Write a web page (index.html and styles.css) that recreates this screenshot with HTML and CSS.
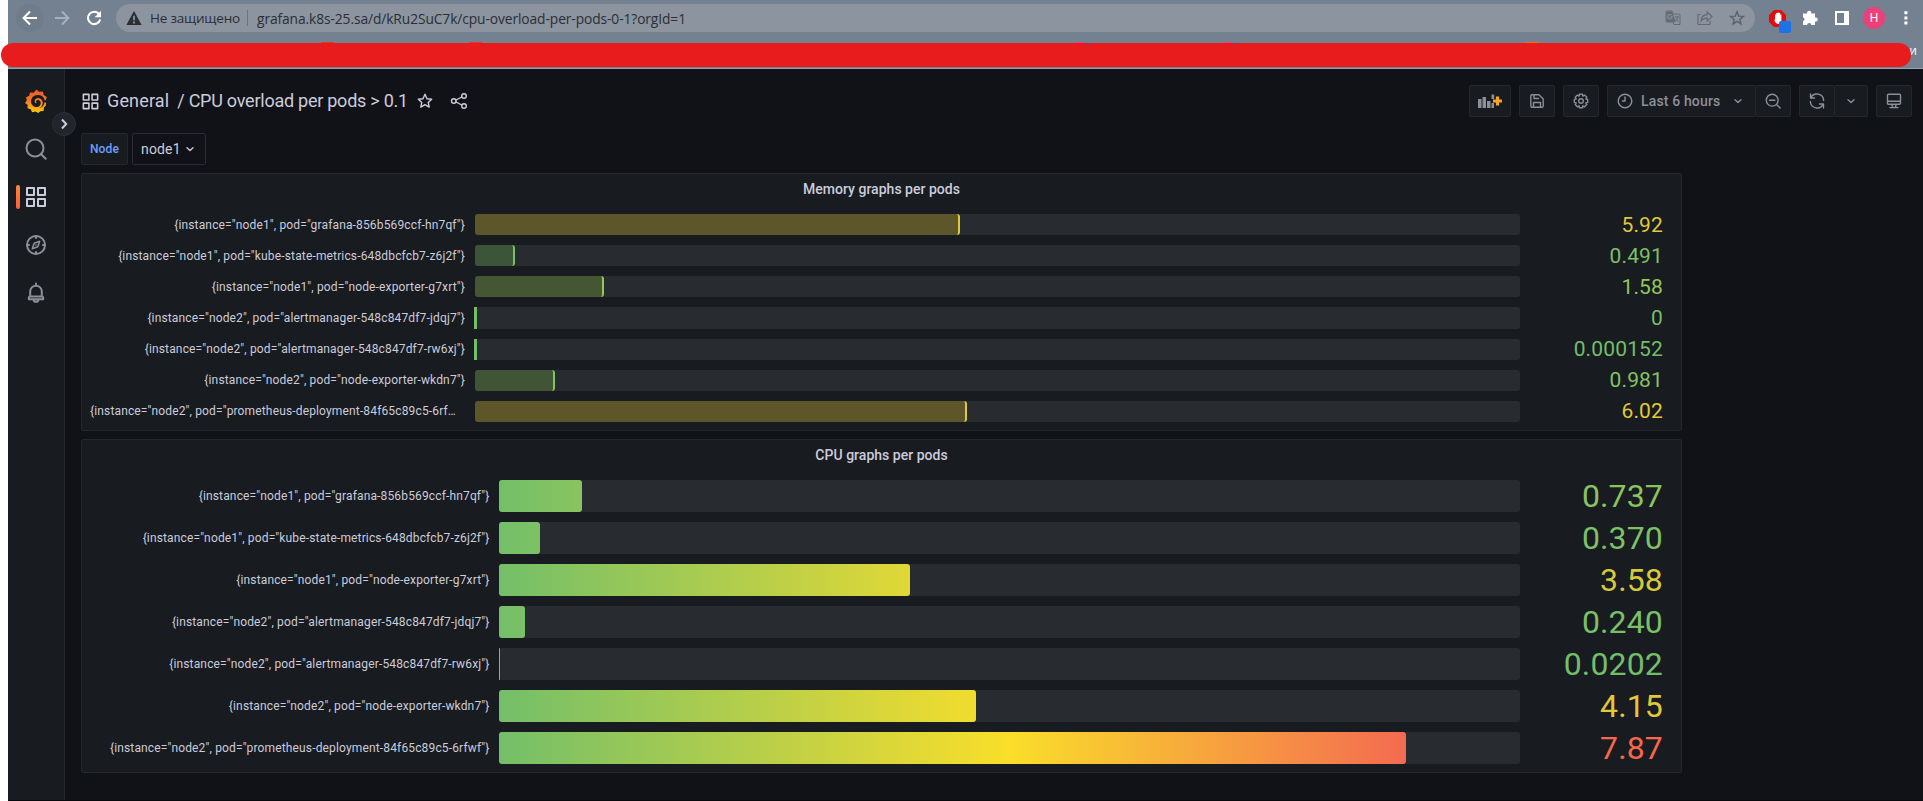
FILE: index.html
```html
<!DOCTYPE html>
<html lang="ru">
<head>
<meta charset="utf-8">
<title>CPU overload per pods &gt; 0.1 - Grafana</title>
<link rel="stylesheet" href="styles.css">
</head>
<body>
<svg class="defs" width="0" height="0">
  <symbol id="apps" viewBox="0 0 24 24"><path fill="currentColor" d="M10,13H3a1,1,0,0,0-1,1v7a1,1,0,0,0,1,1h7a1,1,0,0,0,1-1V14A1,1,0,0,0,10,13ZM9,20H4V15H9ZM21,2H14a1,1,0,0,0-1,1v7a1,1,0,0,0,1,1h7a1,1,0,0,0,1-1V3A1,1,0,0,0,21,2ZM20,9H15V4h5Zm1,4H14a1,1,0,0,0-1,1v7a1,1,0,0,0,1,1h7a1,1,0,0,0,1-1V14A1,1,0,0,0,21,13Zm-1,7H15V15h5ZM10,2H3A1,1,0,0,0,2,3v7a1,1,0,0,0,1,1h7a1,1,0,0,0,1-1V3A1,1,0,0,0,10,2ZM9,9H4V4H9Z"/></symbol>
  <symbol id="down" viewBox="0 0 16 16"><path d="M5 6.8l3 2.700 3-2.700" class="line"/></symbol>
</svg>

<header class="browser">
  <div class="navbar">
    <div class="nav-buttons">
      <span class="nav-btn hot"><svg width="16" height="16" viewBox="0 0 16 16"><path d="M15 8H2M8 1.500L1.600 8 8 14.500" fill="none" stroke="#fff" stroke-width="2"/></svg></span>
      <span class="nav-btn"><svg width="16" height="16" viewBox="0 0 16 16"><path d="M1 8h13M8 1.500L14.400 8 8 14.500" fill="none" stroke="#a8b0ba" stroke-width="2"/></svg></span>
      <span class="nav-btn"><svg width="16" height="16" viewBox="0 0 16 16"><path d="M13.2 4.2A6.2 6.2 0 1 0 14.2 9.5" fill="none" stroke="#fff" stroke-width="2.1"/><path d="M15 .8v6.4H8.6z" fill="#fff"/></svg></span>
    </div>
    <div class="address">
      <svg class="warn" width="16" height="14" viewBox="0 0 16 14"><path d="M8 0l7.6 14H.4z" fill="#2b2e35"/><path d="M8 4.8v4.4M8 10.5v1.9" stroke="#8b949f" stroke-width="1.8"/></svg>
      <span class="insecure">Не защищено</span>
      <span class="url">grafana.k8s-25.sa/d/kRu2SuC7k/cpu-overload-per-pods-0-1?orgId=1</span>
      <span class="address-actions">
        <svg width="16" height="16" viewBox="0 0 16 16"><path d="M2 1h5l1.200 3H14a1 1 0 0 1 1 1v9.500H8.800L8 12H2a1 1 0 0 1-1-1V2a1 1 0 0 1 1-1z" fill="none" stroke="#666b72"/><path d="M1.500 1.500H7l3.600 10.500h-9z" fill="#666b72"/><path d="M6.600 5.200A2.200 2.200 0 1 0 7.200 7H5.200" stroke="#8b949f" stroke-width="1.100" fill="none"/><path d="M9.500 7h4.500M11.800 5.800V7M13 7.500l-2.500 4M10.800 8.800l2.700 3" stroke="#666b72" fill="none"/></svg>
        <svg width="16" height="16" viewBox="0 0 16 16"><path d="M3.500 4.500H1v10h12V11M4.200 11C4.200 6.500 6.800 4.800 10.200 4.700V2L15 6.600l-4.800 4.500V8.200C7.500 8 5.600 9 4.200 11z" fill="none" stroke="#666b72" stroke-width="1.200"/></svg>
        <svg width="16" height="16" viewBox="0 0 16 16"><path d="M8 1.800l1.700 4.300 4.700.300-3.600 3 1.200 4.500L8 11.400l-4 2.500 1.200-4.500-3.600-3 4.700-.300z" fill="none" stroke="#5d6269" stroke-width="1.400"/></svg>
      </span>
    </div>
    <div class="extensions">
      <span class="ublock"><svg width="17" height="17" viewBox="0 0 17 17"><path d="M5 0h7l5 5v7l-5 5H5l-5-5V5z" fill="#e30b0e"/><path d="M4.800 9.500l1.200.700V4.500h1.200V3h1.500v-.5h1.200V3h1.300v1.500h1.200V10c0 2.500-1.200 4-3 4S6.300 12.500 4.800 9.500z" fill="#fff"/></svg><i></i></span>
      <svg width="16" height="16" viewBox="0 0 16 16"><path d="M1 3.500h4.200a2.100 2.100 0 1 1 4 0H13v4a2.100 2.100 0 1 1 0 4V15H9.300a2.100 2.100 0 0 0-4.200 0H1v-3.900a2 2 0 0 0 0-3.900z" fill="#fff"/></svg>
      <svg width="14" height="14" viewBox="0 0 14 14"><path d="M0 0h14v14H0zM2 2v10h7V2z" fill="#fff" fill-rule="evenodd"/></svg>
      <span class="avatar">H</span>
      <svg width="4" height="14" viewBox="0 0 4 14"><path d="M.4.300h3v3h-3zM.4 5.400h3v3h-3zM.4 10.500h3v3h-3z" fill="#fff"/></svg>
    </div>
  </div>
  <div class="bookmarks"><span>ки</span></div>
  <svg class="marks" width="1923" height="2" viewBox="0 0 1923 2"><path d="M321 0h13v2h-13zM469 0h13v2h-13z" fill="#e5392b"/><path d="M1076 0h8v2h-8zM1224 0h8v2h-8z" fill="#ec3b92"/><path d="M1085 0h7v2h-7zM1233 0h7v2h-7z" fill="#0aa3dc"/><path d="M1526 0h12v2h-12z" fill="#ff6d00"/></svg>
  <div class="redact"></div>
</header>

<div class="app">
  <nav class="sidebar">
    <svg class="logo" width="24" height="24" viewBox="0 0 24 24"><defs><linearGradient id="lg" x1="0" y1="0" x2="0" y2="1"><stop offset="0" stop-color="#f05a28"/><stop offset=".4" stop-color="#f4702a"/><stop offset="1" stop-color="#fbca0a"/></linearGradient></defs><path fill="url(#lg)" fill-rule="evenodd" d="M12.500 .6l2.600 2.200 3.800-.400.800 3.600 3.100 2-1 3.200-1.200 0C20 7.800 16.800 6 13.500 6.100 9.600 6.200 6.900 9.300 7.100 12.800c.200 3.300 2.800 5.500 5.700 5.300 2.400-.200 4.200-2.200 3.900-4.400-.2-1.700-1.600-2.900-3.200-2.600-1 .200-1.700 1-1.500 1.900.1.500.5.900 1 1-.9.600-2.300-.200-2.400-1.700-.1-1.900 1.600-3.400 3.500-3.300 2.900.1 4.800 2.500 4.600 5.200-.2 2.500-1.800 4.300-3.700 5.100 3.100-.5 5.200-3 5.500-6l1.600.5-.2 2.600 -2 2.100-.3 3.400-3.300.3-2 1.700-2.900-1.500-3.300.9-1.400-3-3.300-1 .3-3.400L1.100 14l1.700-2.700L2 8.200l3.200-1.400.8-3.400 3.600.3z"/></svg>
    <svg width="24" height="24" viewBox="0 0 24 24"><circle cx="11" cy="11" r="8.500" class="line2"/><path d="M17 17l4.700 4.700" class="line2"/></svg>
    <span class="active"><svg width="24" height="24"><use href="#apps"/></svg></span>
    <svg width="24" height="24" viewBox="0 0 24 24"><circle cx="12" cy="12" r="9" class="line2"/><path d="M12 3.500V5M12 19v1.500M3.500 12H5M19 12h1.500" class="line2"/><path d="M15.700 8.300l-1.900 5.500-5.500 1.900 1.900-5.500z" class="line2 thin"/><circle cx="12" cy="12" r=".8" fill="currentColor"/></svg>
    <svg width="24" height="24" viewBox="0 0 24 24"><path d="M12 2.500v2M6.200 15.500v-5a5.800 5.800 0 0 1 11.600 0v5M6 15.500c-1 0-1.200.8-1.200 1.500v1.300h14.400V17c0-.7-.2-1.500-1.200-1.500zM9.500 18.800c.5 2.700 4.500 2.700 5 0" class="line2"/></svg>
    <span class="expand"><svg width="10" height="14" viewBox="0 0 10 14"><path d="M3 2.500L7.200 7 3 11.500" fill="none" stroke="#ccccdc" stroke-width="2"/></svg></span>
  </nav>

  <main class="main">
    <div class="toolbar">
      <h1 class="crumbs"><svg width="19" height="19"><use href="#apps"/></svg><span class="folder">General</span><span class="dash">/ CPU overload per pods &gt; 0.1</span></h1>
      <svg class="star" width="18" height="18" viewBox="0 0 18 18"><path d="M9 2.200l2 4.500 4.700.500-3.500 3.200 1 4.700L9 12.700l-4.200 2.400 1-4.700-3.500-3.200L7 6.700z" class="line"/></svg>
      <svg class="share" width="18" height="18" viewBox="0 0 18 18"><circle cx="3.800" cy="9" r="2.300" class="line"/><circle cx="14" cy="4" r="2.300" class="line"/><circle cx="14" cy="14" r="2.300" class="line"/><path d="M6 8l5.800-3M6 10l5.800 3" class="line"/></svg>
      <div class="tools">
        <span class="btn add"><svg width="26" height="16" viewBox="0 0 26 16"><path fill="currentColor" d="M1 6h3.500v9H1zM5.500 4H9v11H5.500zM10 8h3.500v7H10zM14.500 1.500h2.700V6h-2.700zM14.500 10h2.500v5h-2.500z"/><path d="M20.500 3.500v9M16 8h9" stroke="#f9a52b" stroke-width="3.200"/></svg></span>
        <span class="btn"><svg width="16" height="16" viewBox="0 0 16 16"><path d="M1.800 3a1.200 1.200 0 0 1 1.200-1.200h7L14.200 6v7a1.200 1.200 0 0 1-1.200 1.200H3A1.200 1.200 0 0 1 1.800 13zM5 2v3.500h4.500M4.500 14v-4.500h7V14" class="line"/></svg></span>
        <span class="btn"><svg width="16" height="16" viewBox="0 0 16 16"><path d="M6.500 1.200h3l.4 1.900 1.700-1 2.200 2.200-1 1.700 1.900.4v3l-1.900.5 1 1.700-2.200 2.200-1.700-1-.4 2h-3l-.4-2-1.700 1-2.200-2.200 1-1.700-1.900-.5v-3l1.900-.4-1-1.700 2.200-2.200 1.700 1z" class="line"/><circle cx="8" cy="8" r="2.300" class="line"/></svg></span>
        <span class="group">
          <span class="btn time"><svg width="16" height="16" viewBox="0 0 16 16"><circle cx="8" cy="8" r="6.800" class="line"/><path d="M8 4v4H5.500" class="line"/></svg><b>Last 6 hours</b><svg width="16" height="16"><use href="#down"/></svg></span>
          <span class="btn"><svg width="16" height="16" viewBox="0 0 16 16"><circle cx="7.200" cy="7.200" r="5.900" class="line"/><path d="M4.500 7.200h5.400M11.500 11.500l3.600 3.600" class="line"/></svg></span>
        </span>
        <span class="group">
          <span class="btn"><svg width="16" height="16" viewBox="0 0 16 16"><path d="M1.500 1v4h4M1.800 5A6.700 6.700 0 0 1 14.600 7.500M14.500 15v-4h-4M14.200 11A6.700 6.700 0 0 1 1.400 8.500" class="line"/></svg></span>
          <span class="btn caret"><svg width="16" height="16"><use href="#down"/></svg></span>
        </span>
        <span class="btn"><svg width="16" height="16" viewBox="0 0 16 16"><path d="M2.500 1.300h11a1 1 0 0 1 1 1v7.900a1 1 0 0 1-1 1h-11a1 1 0 0 1-1-1V2.300a1 1 0 0 1 1-1zM1.500 8.300h13M6.200 11.500v3h3.600v-3M4 14.600h8" class="line"/></svg></span>
      </div>
    </div>

    <div class="variables"><span class="var-label">Node</span><span class="var-value">node1<svg width="16" height="16"><use href="#down"/></svg></span></div>

    <section class="panel memory">
      <h2>Memory graphs per pods</h2>
      <div class="rows">
        <div class="row"><span class="name">{instance="node1", pod="grafana-856b569ccf-hn7qf"}</span><div class="track"><div class="fill" style="width:485px;--c:#dfc936;--b:#5d562a"></div></div><span class="val" style="color:#dfc936">5.92</span></div>
        <div class="row"><span class="name">{instance="node1", pod="kube-state-metrics-648dbcfcb7-z6j2f"}</span><div class="track"><div class="fill" style="width:40px;--c:#7ac065;--b:#3c5437"></div></div><span class="val" style="color:#7ac065">0.491</span></div>
        <div class="row"><span class="name">{instance="node1", pod="node-exporter-g7xrt"}</span><div class="track"><div class="fill" style="width:129px;--c:#92c75b;--b:#455634"></div></div><span class="val" style="color:#92c75b">1.58</span></div>
        <div class="row"><span class="name">{instance="node2", pod="alertmanager-548c847df7-jdqj7"}</span><div class="track"><div class="fill zero" style="--c:#73bf69"></div></div><span class="val" style="color:#73bf69">0</span></div>
        <div class="row"><span class="name">{instance="node2", pod="alertmanager-548c847df7-rw6xj"}</span><div class="track"><div class="fill zero" style="--c:#73bf69"></div></div><span class="val" style="color:#73bf69">0.000152</span></div>
        <div class="row"><span class="name">{instance="node2", pod="node-exporter-wkdn7"}</span><div class="track"><div class="fill" style="width:80px;--c:#84c361;--b:#405536"></div></div><span class="val" style="color:#84c361">0.981</span></div>
        <div class="row"><span class="name clipped">{instance="node2", pod="prometheus-deployment-84f65c89c5-6rfwf"}</span><div class="track"><div class="fill" style="width:492px;--c:#e1ca35;--b:#5d562a"></div></div><span class="val" style="color:#e1ca35">6.02</span></div>
      </div>
    </section>

    <section class="panel cpu">
      <h2>CPU graphs per pods</h2>
      <div class="rows">
        <div class="row"><span class="name">{instance="node1", pod="grafana-856b569ccf-hn7qf"}</span><div class="track"><div class="fill" style="width:83px"></div></div><span class="val" style="color:#89c45f">0.737</span></div>
        <div class="row"><span class="name">{instance="node1", pod="kube-state-metrics-648dbcfcb7-z6j2f"}</span><div class="track"><div class="fill" style="width:41px"></div></div><span class="val" style="color:#7dc164">0.370</span></div>
        <div class="row"><span class="name">{instance="node1", pod="node-exporter-g7xrt"}</span><div class="track"><div class="fill" style="width:411px"></div></div><span class="val" style="color:#d7ca3a">3.58</span></div>
        <div class="row"><span class="name">{instance="node2", pod="alertmanager-548c847df7-jdqj7"}</span><div class="track"><div class="fill" style="width:26px"></div></div><span class="val" style="color:#79c066">0.240</span></div>
        <div class="row"><span class="name">{instance="node2", pod="alertmanager-548c847df7-rw6xj"}</span><div class="track"><div class="fill" style="width:1px"></div></div><span class="val" style="color:#73bf69">0.0202</span></div>
        <div class="row"><span class="name">{instance="node2", pod="node-exporter-wkdn7"}</span><div class="track"><div class="fill" style="width:477px"></div></div><span class="val" style="color:#e0c83a">4.15</span></div>
        <div class="row"><span class="name">{instance="node2", pod="prometheus-deployment-84f65c89c5-6rfwf"}</span><div class="track"><div class="fill" style="width:907px"></div></div><span class="val" style="color:#f8674c">7.87</span></div>
      </div>
    </section>
  </main>
</div>
</body>
</html>
```
FILE: styles.css
```css
* { box-sizing: border-box; }
html, body { height: 100%; overflow: hidden; }
body { margin: 0; padding-left: 8px; background: #fff; display: flex; flex-direction: column; font-family: Roboto, "Noto Sans", sans-serif; font-size: 14px; letter-spacing: .15px; color: #ccccdc; }
svg { display: block; flex: none; }
.defs { position: absolute; }
.line { fill: none; stroke: currentColor; stroke-width: 1.4; stroke-linecap: round; stroke-linejoin: round; }
.line2 { fill: none; stroke: currentColor; stroke-width: 2; stroke-linecap: round; stroke-linejoin: round; }
.thin { stroke-width: 1.6; }

.browser { position: relative; height: 69px; flex: none; background: #748190; border-bottom: 1px solid #98a3af; }
.navbar { display: flex; align-items: center; height: 36px; }
.nav-buttons { display: flex; flex: none; gap: 4px; width: 108px; padding-left: 8px; }
.nav-btn { width: 28px; height: 28px; border-radius: 50%; display: grid; place-items: center; }
.hot { background: #6f7c8c; }
.address { flex: none; width: 1639px; height: 28px; border-radius: 14px; background: #8b949f; display: flex; align-items: center; padding: 0 10px; color: #2b2e35; font-family: "Open Sans", "Noto Sans", sans-serif; letter-spacing: 0; white-space: nowrap; }
.insecure { margin-left: 8px; width: 98px; height: 16px; line-height: 16px; font-size: 13.5px; letter-spacing: -.2px; border-right: 1px solid #6c7580; }
.url { margin-left: 9px; font-size: 13.8px; letter-spacing: -.1px; }
.address-actions { display: flex; gap: 16px; margin-left: auto; }
.extensions { display: flex; flex: none; align-items: center; margin-left: 14px; }
.ublock { position: relative; margin-right: 16px; }
.ublock i { position: absolute; left: 10px; top: 11px; width: 12px; height: 12px; border-radius: 2px; background: #1a73e8; }
.extensions > svg { margin-right: 17px; }
.avatar { width: 22px; height: 22px; margin: 0 19px 0 -3px; border-radius: 50%; background: #ec407a; color: #fff; font-size: 12px; line-height: 22px; text-align: center; letter-spacing: 0; }
.bookmarks { display: flex; justify-content: flex-end; padding: 7px 6px 0 0; color: #fff; font: 12px/16px "Open Sans", "Noto Sans", sans-serif; letter-spacing: 0; }
.marks { position: absolute; left: -8px; top: 42px; }
.redact { position: absolute; left: -7px; top: 43px; width: 1910px; height: 24px; border-radius: 12px; background: #e81c1c; }

.app { flex: 1; display: flex; background: #111217; border-bottom: 1px solid #08090b; min-height: 0; }
.sidebar { position: relative; width: 57px; flex: none; background: #181b1f; border-right: 1px solid #24262b; display: flex; flex-direction: column; align-items: center; gap: 24px; padding-top: 20px; color: #8e8e99; }
.active { position: relative; color: #ccccdc; }
.active::before { content: ""; position: absolute; left: -8px; width: 4px; height: 24px; border-radius: 2px; background: linear-gradient(#ff8833, #f55f3e); }
.expand { position: absolute; left: 44px; top: 43px; width: 24px; height: 24px; border-radius: 50%; background: #22252b; border: 1px solid #2e3036; display: grid; place-items: center; z-index: 1; }

.main { flex: 1; min-width: 0; padding: 16px 11px 0 16px; display: flex; flex-direction: column; }
.toolbar { display: flex; align-items: center; height: 32px; }
.crumbs { display: flex; align-items: center; margin: 0; font-size: 18px; font-weight: 400; line-height: 22px; white-space: nowrap; }
.folder { margin: 0 8px 0 7px; }
.dash { letter-spacing: -.25px; }
.star { margin-left: 8px; }
.share { margin-left: 16px; }
.tools { margin-left: auto; display: flex; gap: 8px; color: #8e8e99; }
.group { display: flex; }
.btn { height: 32px; width: 36px; display: flex; align-items: center; justify-content: center; background: #181b1f; border: 1px solid #25272c; border-radius: 2px; }
.group .btn + .btn { border-left: 0; border-radius: 0 2px 2px 0; }
.btn.add { width: 42px; }
.btn.time { width: 149px; justify-content: flex-start; padding-left: 9px; }
.time b { font-weight: 500; margin: 0 10px 0 8px; white-space: nowrap; }
.time + .btn { width: 35px; }
.btn.caret { width: 33px; }
.variables { display: flex; gap: 4px; margin-top: 16px; height: 32px; }
.var-label { width: 47px; border: 1px solid #25272c; border-radius: 2px; background: #181b1f; color: #6e9fff; font-size: 12px; font-weight: 500; line-height: 30px; text-align: center; }
.var-value { width: 74px; border: 1px solid #2c2d34; border-radius: 2px; display: flex; align-items: center; padding-left: 8px; gap: 1px; white-space: nowrap; }

.panel { width: 1601px; flex: none; margin-top: 8px; padding: 0 8px 8px; background: #181b1f; border: 1px solid #25272c; border-radius: 2px; display: flex; flex-direction: column; }
.memory { height: 258px; --name: 385px; --bar: 1045px; --font: 21px; }
.cpu { height: 334px; --name: 409px; --bar: 1021px; --font: 32px; }
.panel h2 { margin: 0 0 8px; height: 32px; line-height: 31px; font-size: 14px; font-weight: 500; letter-spacing: .02px; text-align: center; }
.rows { flex: 1; min-height: 0; display: flex; flex-direction: column; gap: 10px; }
.row { flex: 1; min-height: 0; display: grid; grid-template-columns: var(--name) var(--bar) 1fr; grid-template-rows: minmax(0, 1fr); align-items: center; }
.name { padding-right: 10px; font-size: 12px; line-height: 18px; text-align: right; white-space: nowrap; overflow: hidden; text-overflow: ellipsis; }
.cpu .name { padding-right: 9.5px; }
.name.clipped { padding-right: 17px; }
.track { height: 100%; background: #282b30; border-radius: 3px; }
.fill { height: 100%; border-radius: 3px; }
.memory .fill { background: var(--b); border-right: 2px solid var(--c); }
.memory .zero { width: 3px; margin-left: -1px; border: 0; border-radius: 0; background: var(--c); }
.cpu .fill { background: linear-gradient(to right, #73bf69 0, #fade2a 510px, #f2495c 1021px); }
.val { padding-right: 10px; font-size: var(--font); line-height: 1; text-align: right; }
.memory .val { padding-top: 1px; }
```
